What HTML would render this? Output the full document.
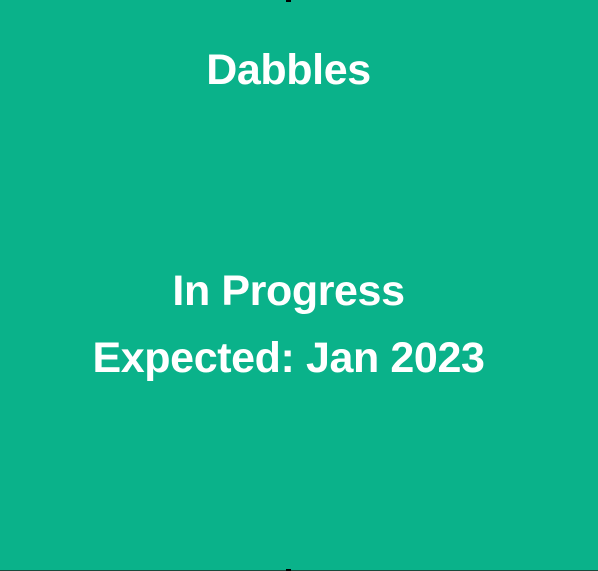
<!DOCTYPE html>
<html><head><style>
html,body{margin:0;padding:0}
body{width:598px;height:571px;background:#0ab28a;position:relative;overflow:hidden;font-family:"Liberation Sans",sans-serif;font-weight:bold;color:#fff}
.t{position:absolute;left:0;width:577px;text-align:center;font-size:43px;letter-spacing:-0.4px;line-height:1}
.bl{position:absolute;left:0;bottom:0;width:598px;height:1px;background:#1a4a3c}
</style></head><body>
<div style="position:absolute;left:286px;top:0;width:5px;height:2px;background:#000"></div>
<div class="t" style="top:49px">Dabbles</div>
<div class="t" style="top:270px">In Progress</div>
<div class="t" style="top:337px">Expected: Jan 2023</div>
<div class="bl"></div>
<div style="position:absolute;left:286px;bottom:0;width:5px;height:2px;background:#fff;border:1px solid #000;box-sizing:border-box"></div>
</body></html>
